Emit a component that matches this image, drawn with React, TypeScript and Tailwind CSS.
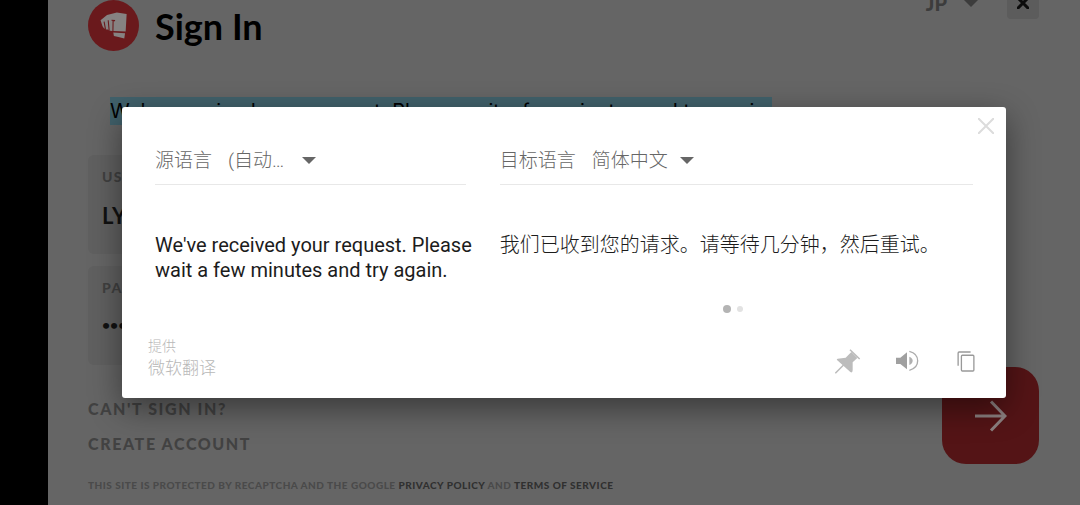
import React from "react";

function FistLogo() {
  return (
    <svg viewBox="0 0 52 52" className="size-[51px] shrink-0" aria-hidden="true">
      <circle cx="26" cy="26" r="26" fill="#6a191c" />
      <path
        d="M12.8 20.6 19.4 15.4 29.4 12.8 39.4 14.2 38.4 32 25.8 31.6 24.4 31.6 21.4 31 20.6 30 18.8 30 16.2 28.8 14.8 26.8Z"
        fill="#868282"
      />
      <path d="M25.8 33.2 37.8 34 37 39.2 31 37.6 26.4 36.8Z" fill="#868282" />
      <path d="M16.4 22 17.8 29.6M20.6 20.6 21.6 31.4M25.6 20.6 25.4 32M24 20.6 27.6 21" stroke="#6a191c" strokeWidth="1.1" fill="none" />
    </svg>
  );
}

function Caret({ className }: { className: string }) {
  return (
    <svg viewBox="0 0 14 7" className={className} aria-hidden="true">
      <path d="M0 0H14L7 7Z" fill="currentColor" />
    </svg>
  );
}

function Cross({ className, width }: { className: string; width: number }) {
  return (
    <svg viewBox="0 0 16 16" className={className} fill="none" stroke="currentColor" strokeWidth={width} aria-hidden="true">
      <path d="M0 0 16 16M16 0 0 16" />
    </svg>
  );
}

function Field({ id, label, type, value, inputClass }: { id: string; label: string; type: string; value: string; inputClass: string }) {
  return (
    <div className="flex h-[99px] flex-col rounded-md bg-[#606060] px-3.5 pt-3.5">
      <label htmlFor={id} className="text-sm leading-4 font-black tracking-widest text-[#404040]">
        {label}
      </label>
      <input id={id} type={type} defaultValue={value} className={`mt-4 bg-transparent font-bold text-[#111] outline-none ${inputClass}`} />
    </div>
  );
}

function SignInPage() {
  return (
    <div className="pr-[41px] pb-3 pl-10">
      <header className="flex items-start justify-between">
        <div className="flex items-center gap-4">
          <FistLogo />
          <h1 className="text-4xl leading-10 font-bold text-black">Sign In</h1>
        </div>
        <div className="-mt-[13px] flex items-center">
          <button type="button" className="flex h-8 items-center gap-4 text-xl font-black text-[#3c3c3c]">
            JP
            <Caret className="h-2 w-4" />
          </button>
          <button type="button" aria-label="Close" className="ml-7 flex size-8 items-center justify-center rounded bg-[#5c5c5c] text-[#0c0c0c]">
            <Cross className="size-3" width={4} />
          </button>
        </div>
      </header>
      <p className="mt-[46px] ml-[22px] w-fit bg-[#41616b] font-['Inter',sans-serif] text-xl leading-7 text-black">
        We've received your request. Please wait a few minutes and try again.
      </p>
      <form className="mt-[30px]">
        <div className="flex max-w-[664px] flex-col gap-3">
          <Field id="username" label="USERNAME" type="text" value="LY" inputClass="h-7 text-[22px] tracking-wide" />
          <Field id="password" label="PASSWORD" type="password" value="password" inputClass="h-6 text-sm" />
        </div>
        <div className="mt-0.5 flex items-start justify-between">
          <div className="flex flex-col gap-[11px] pt-[30px] text-base leading-6 font-black tracking-widest text-[#424242]">
            <a href="#help">CAN'T SIGN IN?</a>
            <a href="#create">CREATE ACCOUNT</a>
          </div>
          <button type="button" aria-label="Sign in" className="flex size-[97px] items-center justify-center rounded-3xl bg-[#541416] text-[#8c8080]">
            <svg viewBox="0 0 32 32" className="size-8" fill="none" stroke="currentColor" strokeWidth="3" aria-hidden="true">
              <path d="M0 16H30M16 1.5 30 16 16 30.5" />
            </svg>
          </button>
        </div>
      </form>
      <p className="mt-[13px] text-[10px] leading-4 font-black tracking-wider text-[#4a4a4a]">
        THIS SITE IS PROTECTED BY RECAPTCHA AND THE GOOGLE{" "}
        <a href="#privacy" className="text-[#303030]">PRIVACY POLICY</a> AND{" "}
        <a href="#terms" className="text-[#303030]">TERMS OF SERVICE</a>
      </p>
    </div>
  );
}

function TranslatorDialog() {
  return (
    <section
      role="dialog"
      aria-label="Translation"
      className="relative w-full rounded-[3px] bg-white px-[33px] pt-9 pb-[18px] font-['Roboto','Noto_Sans_CJK_SC',sans-serif] shadow-[0_10px_32px_rgba(0,0,0,0.45)]"
    >
      <button type="button" aria-label="Dismiss" className="absolute top-[11px] right-3 text-[#dcdcdc]">
        <Cross className="size-4" width={2} />
      </button>
      <div className="flex gap-[34px]">
        <div className="w-[38%] shrink-0">
          <button type="button" className="flex h-[42px] w-full items-start border-b border-[#e8e8e8] text-[19px] leading-9 font-light text-[#666]">
            <span>源语言</span>
            <span className="ml-4">(自动…</span>
            <Caret className="mt-3.5 ml-[18px] h-[7px] w-3.5" />
          </button>
          <p className="mt-12 text-xl leading-[25px] whitespace-nowrap text-[#1c1c1c]">
            We've received your request. Please
            <br />
            wait a few minutes and try again.
          </p>
        </div>
        <div className="flex-1">
          <button type="button" className="flex h-[42px] w-full items-start border-b border-[#e8e8e8] text-[19px] leading-9 font-light text-[#666]">
            <span>目标语言</span>
            <span className="ml-4">简体中文</span>
            <Caret className="mt-3.5 ml-3 h-[7px] w-3.5" />
          </button>
          <p className="mt-12 text-xl leading-[25px] font-light text-[#1c1c1c]">我们已收到您的请求。请等待几分钟，然后重试。</p>
          <div className="mt-[47px] flex items-center justify-center gap-1.5 pr-1.5">
            <span className="size-2 rounded-full bg-[#b4b4b4]" />
            <span className="size-1.5 rounded-full bg-[#e2e2e2]" />
          </div>
        </div>
      </div>
      <footer className="mt-[23px] -mr-[7px] -ml-[7px] flex items-start justify-between font-light text-[#b8b8b8]">
        <div>
          <p className="text-sm leading-5">提供</p>
          <p className="text-[17px] leading-6">微软翻译</p>
        </div>
        <div className="mt-[11px] flex items-center gap-[31px] text-[#a3a3a3]">
          <button type="button" aria-label="Pin" className="flex size-7 items-center justify-center">
            <svg viewBox="0 0 78 78" className="size-[26px]" aria-hidden="true">
              <path d="M45 5 74 33M28 49 1 76" stroke="#bcbcbc" strokeWidth="4.5" fill="none" />
              <path d="M49 12 67 30 53 43V66Q53 76 46 72L6 36Q4 33 8 32L32 29Z" fill="#bcbcbc" />
            </svg>
          </button>
          <button type="button" aria-label="Listen" className="flex size-7 items-center justify-center">
            <svg viewBox="0 0 72 66" className="h-[22px] w-6" aria-hidden="true">
              <path d="M3 23H16L36 7V58L16 42H3Z" fill="#a0a0a0" />
              <path d="M43 20Q53 24 53 32.5T43 45Z" fill="#b0b0b0" />
              <path d="M43 4Q68 10 68 32.5T43 61" stroke="#acacac" strokeWidth="4" fill="none" />
            </svg>
          </button>
          <button type="button" aria-label="Copy" className="flex size-7 items-center justify-center">
            <svg viewBox="0 0 54 64" className="h-[21px] w-[18px]" fill="none" stroke="#999" strokeWidth="4" aria-hidden="true">
              <path d="M3 45V6Q3 3 6 3H41" />
              <rect x="13" y="13" width="38" height="48" rx="3" />
            </svg>
          </button>
        </div>
      </footer>
    </section>
  );
}

export default function App() {
  return (
    <div className="flex min-h-screen bg-black">
      <div className="w-12 shrink-0" />
      <main className="relative flex-1 overflow-hidden bg-[#656565] font-['Lato',sans-serif]">
        <SignInPage />
        <div className="absolute inset-0 flex items-center px-[74px]">
          <TranslatorDialog />
        </div>
      </main>
    </div>
  );
}
